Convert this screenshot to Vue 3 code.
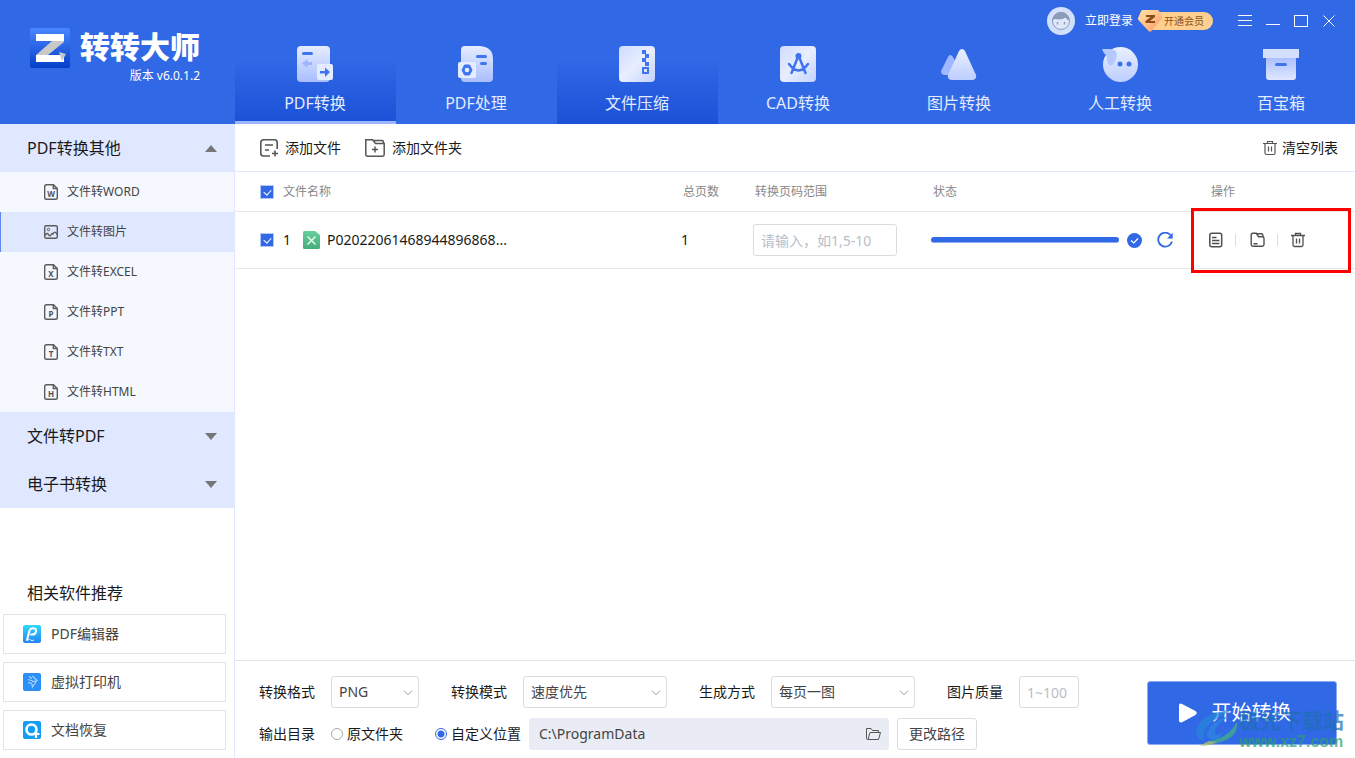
<script setup>
import { ref } from 'vue'

const tabs = [
  { id: 'pdf', label: 'PDF转换', state: 'active' },
  { id: 'process', label: 'PDF处理', state: '' },
  { id: 'zip', label: '文件压缩', state: 'hovered' },
  { id: 'cad', label: 'CAD转换', state: '' },
  { id: 'image', label: '图片转换', state: '' },
  { id: 'human', label: '人工转换', state: '' },
  { id: 'box', label: '百宝箱', state: '' }
]

const formats = [
  { label: '文件转WORD', letter: 'W' },
  { label: '文件转图片', letter: '' },
  { label: '文件转EXCEL', letter: 'X' },
  { label: '文件转PPT', letter: 'P' },
  { label: '文件转TXT', letter: 'T' },
  { label: '文件转HTML', letter: 'H' }
]
const current = ref('文件转图片')

const allChecked = ref(true)
const rowChecked = ref(true)
const range = ref('')
const format = ref('PNG')
const mode = ref('速度优先')
const method = ref('每页一图')
const quality = ref('')
const target = ref('custom')
const path = ref('C:\\ProgramData')
</script>

<template>
  <div class="app">
    <header class="header">
      <div class="brand">
        <svg class="brand-logo" width="40" height="40" viewBox="0 0 40 40" aria-hidden="true">
          <defs>
            <linearGradient id="logoBg" x1="0" y1="0" x2="0" y2="1">
              <stop offset="0" stop-color="#4a86ff" />
              <stop offset="1" stop-color="#0440c8" />
            </linearGradient>
          </defs>
          <rect width="40" height="40" rx="2" fill="url(#logoBg)" />
          <path d="M6 27 22 13h12v1L18 27z" fill="#c9c9c9" />
          <path d="M6 6h28v7H6z" fill="#fff" />
          <path d="M6 27h28v7H6z" fill="#fff" />
          <path d="M29 24l7 2-4 7z" fill="#c4c8cf" />
        </svg>
        <div class="brand-text">
          <h1 class="brand-name">转转大师</h1>
          <p class="brand-version">版本 v6.0.1.2</p>
        </div>
      </div>

      <div class="header-main">
        <div class="topbar">
          <svg class="avatar" width="28" height="28" viewBox="0 0 28 28" aria-hidden="true">
            <circle cx="14" cy="14" r="14" fill="#d3e0fb" />
            <circle cx="14" cy="14" r="8.5" fill="#dfe8fb" stroke="#8c9bb8" />
            <path d="M5.5 13.5a8.5 8.5 0 0 1 17 0c-2-.5-3-1.500-4-3-2.500 2-6 2.500-10.500 1.500-1 .3-1.500 1-2.500 1.500z" fill="#8c9bb8" />
            <path d="M10.500 15v2.500M17.500 15v2.500" stroke="#8c9bb8" stroke-width="1.500" />
          </svg>
          <button class="login" type="button">立即登录</button>
          <button class="vip" type="button">
            <svg class="vip-gem" width="24" height="22" viewBox="0 0 24 22" aria-hidden="true">
              <defs>
                <linearGradient id="gem" x1="0" y1="0" x2="1" y2="1">
                  <stop offset="0" stop-color="#ffe0a0" />
                  <stop offset=".5" stop-color="#ffc48a" />
                  <stop offset="1" stop-color="#ff8a5c" />
                </linearGradient>
              </defs>
              <path d="M5 0h14q1.500 0 2.400 1.400L24 7q.5 1-.4 2L13.500 21q-1.500 1.500-3 0L.4 10q-.8-1-.2-2.200L3 1.200Q3.600 0 5 0z" fill="url(#gem)" />
              <path d="M8 5h9v2l-5 4h5v2H7.500v-2l5-4H8z" fill="#8f4b18" />
            </svg>
            <span class="vip-label">开通会员</span>
          </button>
          <div class="window-buttons">
            <button type="button" aria-label="菜单">
              <svg width="14" height="14" viewBox="0 0 14 14"><path d="M0 1.500h14M0 6.500h14M0 11.500h14" stroke="#fff" /></svg>
            </button>
            <button type="button" aria-label="最小化">
              <svg width="14" height="14" viewBox="0 0 14 14"><path d="M0 10.500h14" stroke="#fff" /></svg>
            </button>
            <button type="button" aria-label="最大化">
              <svg width="14" height="14" viewBox="0 0 14 14"><rect x=".5" y="1.500" width="13" height="11" fill="none" stroke="#fff" /></svg>
            </button>
            <button type="button" aria-label="关闭">
              <svg width="14" height="14" viewBox="0 0 14 14"><path d="M1.500 1.500l11 11M12.500 1.500l-11 11" stroke="#fff" /></svg>
            </button>
          </div>
        </div>

        <nav class="tabs">
          <button v-for="tab in tabs" :key="tab.id" type="button" class="tab" :class="tab.state">
            <svg class="tab-icon" width="36" height="36" viewBox="0 0 36 36" aria-hidden="true">
              <defs>
                <linearGradient id="pale" x1="0" y1="0" x2="0" y2="1">
                  <stop offset="0" stop-color="#e6ecff" />
                  <stop offset="1" stop-color="#a9beff" />
                </linearGradient>
                <linearGradient id="light" x1="0" y1="0" x2="1" y2="1">
                  <stop offset="0" stop-color="#cfdcff" />
                  <stop offset=".5" stop-color="#e8eeff" />
                  <stop offset="1" stop-color="#c2d1ff" />
                </linearGradient>
                <linearGradient id="soft" x1="0" y1="0" x2="0" y2="1">
                  <stop offset="0" stop-color="#eaf0ff" />
                  <stop offset="1" stop-color="#bdceff" />
                </linearGradient>
                <linearGradient id="crate" x1="0" y1="0" x2="0" y2="1">
                  <stop offset="0" stop-color="#a9beff" />
                  <stop offset="1" stop-color="#dfe8ff" />
                </linearGradient>
              </defs>
              <template v-if="tab.id === 'pdf'">
                <rect width="33" height="36" rx="4" fill="url(#pale)" />
                <path d="M6.500 7.500h8" stroke="#3f74ee" stroke-width="3" stroke-linecap="round" />
                <path d="M5 17.500l5.500-4.500v3H15v3h-4.500v3z" fill="#9cb5fa" />
                <rect x="20" y="18" width="16" height="16" rx="2" fill="#e4ecff" />
                <path d="M33 26l-5-4.500V25h-5v2.500h5V31z" fill="#3f74ee" />
              </template>
              <template v-else-if="tab.id === 'process'">
                <path d="M7 0h15q13 1 13 13v19q0 4-4 4H7q-4 0-4-4V4q0-4 4-4z" fill="url(#pale)" />
                <path d="M19.500 10.500h8M23.500 17.500h4" stroke="#3f74ee" stroke-width="3" stroke-linecap="round" />
                <rect y="16" width="18" height="16" rx="2" fill="#e4ecff" />
                <path d="M6.500 19h5l2.500 5-2.500 5h-5L4 24z" fill="#3f74ee" stroke="#3f74ee" stroke-linejoin="round" />
                <circle cx="9" cy="24" r="2.300" fill="#e4ecff" />
              </template>
              <template v-else-if="tab.id === 'zip'">
                <rect width="36" height="36" rx="4" fill="url(#light)" />
                <path d="M23 4h4v4h-4zM26 8h4v4h-4zM23 12h4v4h-4zM26 16h4v4h-4z" fill="#3f74ee" />
                <rect x="24" y="22" width="5" height="5" fill="none" stroke="#3f74ee" stroke-width="2" />
              </template>
              <template v-else-if="tab.id === 'cad'">
                <rect width="36" height="36" rx="4" fill="url(#light)" />
                <g fill="none" stroke="#3f74ee" stroke-width="2.500" stroke-linecap="round">
                  <path d="M17.500 12l-6 15M19.500 12l6 15M9 18q9.500 13 19 0" />
                </g>
                <circle cx="18.500" cy="10" r="3" fill="#3f74ee" />
              </template>
              <template v-else-if="tab.id === 'image'">
                <path d="M.5 24L7 11q2-4 5 0l4 8-5 10H3q-4-1-2.500-5z" fill="#9fb8ff" />
                <path d="M7 29L18 5q3-4 6 0l11 24q1 4-3 5H10q-4-1-3-5z" fill="url(#soft)" />
              </template>
              <template v-else-if="tab.id === 'human'">
                <circle cx="18.500" cy="18.500" r="17.500" fill="url(#soft)" />
                <path d="M0 3h9q7 1 5.500 8-1.500 7-6 9Q4 17 5 10 1 7 0 3z" fill="#b5c8ff" />
                <circle cx="18" cy="18" r="2.500" fill="#3f74ee" />
                <circle cx="27" cy="18" r="2.500" fill="#3f74ee" />
              </template>
              <template v-else>
                <path d="M3 11h30v20q0 3-3 3H6q-3 0-3-3z" fill="url(#crate)" />
                <path d="M0 3h36v9H0z" fill="#d3dfff" />
                <path d="M13.500 18.500h9" stroke="#3f74ee" stroke-width="3" stroke-linecap="round" />
              </template>
            </svg>
            <span class="tab-label">{{ tab.label }}</span>
          </button>
        </nav>
      </div>
    </header>

    <div class="body">
      <aside class="sidebar">
        <button class="group" type="button">
          <span>PDF转换其他</span>
          <svg width="12" height="7" viewBox="0 0 12 7" aria-hidden="true"><path d="M6 0l6 7H0z" fill="#767676" /></svg>
        </button>
        <ul class="formats">
          <li v-for="item in formats" :key="item.label">
            <button type="button" class="format" :class="{ selected: item.label === current }" @click="current = item.label">
              <svg v-if="item.letter" width="14" height="16" viewBox="0 0 14 16" aria-hidden="true">
                <path d="M9.500.7H2.500q-1.800 0-1.800 1.800v11q0 1.800 1.800 1.800h9q1.800 0 1.800-1.800V4.500zM9.300 1v3.500h3.700" fill="none" stroke="#5c5c5c" stroke-width="1.400" />
                <text x="7" y="12.500" class="doc-letter" text-anchor="middle">{{ item.letter }}</text>
              </svg>
              <svg v-else width="14" height="16" viewBox="0 0 14 16" aria-hidden="true">
                <rect x=".7" y="1.700" width="12.600" height="12.600" rx="1.500" fill="none" stroke="#5c5c5c" stroke-width="1.400" />
                <circle cx="4.500" cy="5.500" r="1.200" fill="none" stroke="#5c5c5c" />
                <path d="M1 11.500q2.500-4 4 0 1.500 1 2.500-1.500 1-1 1.500 0Q11 6 13 10.500" fill="none" stroke="#5c5c5c" stroke-width="1.300" />
              </svg>
              <span>{{ item.label }}</span>
            </button>
          </li>
        </ul>
        <button class="group" type="button">
          <span>文件转PDF</span>
          <svg width="12" height="7" viewBox="0 0 12 7" aria-hidden="true"><path d="M6 7l6-7H0z" fill="#767676" /></svg>
        </button>
        <button class="group" type="button">
          <span>电子书转换</span>
          <svg width="12" height="7" viewBox="0 0 12 7" aria-hidden="true"><path d="M6 7l6-7H0z" fill="#767676" /></svg>
        </button>

        <section class="related">
          <h2 class="related-title">相关软件推荐</h2>
          <a class="related-card" href="#">
            <svg width="18" height="18" viewBox="0 0 18 18" aria-hidden="true">
              <defs>
                <linearGradient id="cyan" x1="0" y1="0" x2="0" y2="1">
                  <stop offset="0" stop-color="#31d9fb" />
                  <stop offset="1" stop-color="#2583f2" />
                </linearGradient>
              </defs>
              <rect width="18" height="18" rx="2" fill="url(#cyan)" />
              <path d="M4 15L6.500 5.500Q7.500 3 10.500 3.200q3 .3 2.500 3.300-.7 3.500-5 3" fill="none" stroke="#fff" stroke-width="2" stroke-linecap="round" />
              <path d="M5 15.500q1.500-3 2.500-.5 1.500 1.500 3.500 0" fill="none" stroke="#d9f1ff" />
            </svg>
            <span>PDF编辑器</span>
          </a>
          <a class="related-card" href="#">
            <svg width="18" height="18" viewBox="0 0 18 18" aria-hidden="true">
              <rect width="18" height="18" rx="2" fill="#2b8ff8" />
              <path d="M6 3.500l3 2M9.500 3l4.500 4.500-5 1.500M5 6.500l5 1.500M5 10q4-1.500 4.500 4L13.500 8" fill="none" stroke="#9fd2ff" stroke-width="1.200" />
            </svg>
            <span>虚拟打印机</span>
          </a>
          <a class="related-card" href="#">
            <svg width="18" height="18" viewBox="0 0 18 18" aria-hidden="true">
              <rect width="18" height="18" rx="2" fill="#149df5" />
              <circle cx="8.500" cy="8.500" r="5" fill="none" stroke="#fff" stroke-width="2.600" />
              <path d="M13 9.500v7.500M9.500 13h7" stroke="#fff" stroke-width="2.200" />
            </svg>
            <span>文档恢复</span>
          </a>
        </section>
      </aside>

      <main class="main">
        <div class="toolbar">
          <button class="tool" type="button">
            <svg width="18" height="18" viewBox="0 0 18 18" aria-hidden="true">
              <path d="M10 17H3.500q-2.700 0-2.700-2.700V3.500Q.8.800 3.500.8h11q2.700 0 2.700 2.700V10" fill="none" stroke="#555" stroke-width="1.600" />
              <path d="M5 6h8M5 11h4M15 11.500v6M12 14.500h6" stroke="#555" stroke-width="1.600" />
            </svg>
            <span>添加文件</span>
          </button>
          <button class="tool" type="button">
            <svg width="20" height="18" viewBox="0 0 20 18" aria-hidden="true">
              <path d="M.8 15.500V.8h6.700l3 3.700h8.700v11q0 1.700-1.700 1.700h-15q-1.700 0-1.700-1.700zM9 1.500h8q1.500 0 1.500 2.500" fill="none" stroke="#555" stroke-width="1.500" />
              <path d="M10 7.500v6M7 10.500h6" stroke="#555" stroke-width="1.500" />
            </svg>
            <span>添加文件夹</span>
          </button>
          <button class="tool clear" type="button">
            <svg width="14" height="16" viewBox="0 0 14 16" aria-hidden="true">
              <path d="M0 3.500h14M4.500 3V1.500h5V3M2 4v9q0 1.500 1.500 1.500h7q1.500 0 1.500-1.500V4M5.500 6.500v5M8.500 6.500v5" fill="none" stroke="#555" stroke-width="1.200" />
            </svg>
            <span>清空列表</span>
          </button>
        </div>

        <table class="files">
          <thead>
            <tr>
              <th class="col-check"><input v-model="allChecked" type="checkbox" class="check" aria-label="全选" /></th>
              <th>文件名称</th>
              <th class="col-pages">总页数</th>
              <th class="col-range">转换页码范围</th>
              <th class="col-status">状态</th>
              <th class="col-actions">操作</th>
            </tr>
          </thead>
          <tbody>
            <tr>
              <td class="col-check"><input v-model="rowChecked" type="checkbox" class="check" aria-label="选择文件" /></td>
              <td>
                <div class="file">
                  <span class="file-index">1</span>
                  <svg width="17" height="18" viewBox="0 0 17 18" aria-hidden="true">
                    <defs>
                      <linearGradient id="sheet" x1="0" y1="0" x2="0" y2="1">
                        <stop offset="0" stop-color="#65cf9a" />
                        <stop offset="1" stop-color="#48ac7a" />
                      </linearGradient>
                    </defs>
                    <path d="M1.500 0H12l5 4v12.500q0 1.500-1.500 1.500h-14Q0 18 0 16.500v-15Q0 0 1.500 0z" fill="url(#sheet)" />
                    <path d="M4.500 5.500l8 8M12.500 5.500l-8 8" stroke="#eafff4" stroke-width="1.400" />
                  </svg>
                  <span>P02022061468944896868...</span>
                </div>
              </td>
              <td>1</td>
              <td><input v-model="range" class="box range" type="text" placeholder="请输入，如1,5-10" aria-label="转换页码范围" /></td>
              <td>
                <div class="status">
                  <div class="progress" role="progressbar" aria-valuenow="100"></div>
                  <svg width="15" height="15" viewBox="0 0 15 15" aria-hidden="true">
                    <circle cx="7.500" cy="7.500" r="7.500" fill="#3168e6" />
                    <path d="M4 7.500L6.800 10 11 5.500" fill="none" stroke="#fff" stroke-width="1.200" />
                  </svg>
                  <button class="icon-button retry" type="button" aria-label="重试">
                    <svg width="16" height="16" viewBox="0 0 16 16">
                      <path d="M13.500 3A7 7 0 1 0 15 9.500" fill="none" stroke="#3168e6" stroke-width="1.800" />
                      <path d="M15.700.8v5.700H10z" fill="#3168e6" />
                    </svg>
                  </button>
                </div>
              </td>
              <td class="actions-cell">
                <div class="actions">
                  <button class="icon-button" type="button" aria-label="打开文件">
                    <svg width="14" height="16" viewBox="0 0 14 16">
                      <rect x=".8" y="1.300" width="11.900" height="13.400" rx="2" fill="none" stroke="#505050" stroke-width="1.500" />
                      <path d="M3 5.500h4.500M3 8.500h7.500M3 11.500h7.500" stroke="#505050" stroke-width="1.300" />
                    </svg>
                  </button>
                  <i class="divider"></i>
                  <button class="icon-button" type="button" aria-label="打开文件夹">
                    <svg width="16" height="16" viewBox="0 0 16 16">
                      <path d="M2.200 12.500V3q0-1.700 1.700-1.700h3.400L9.500 4.700h3.800q1.700 0 1.700 1.700v6.200q0 1.700-1.700 1.700H3.900q-1.700 0-1.700-1.700zM8 1.800h4.500q1.500 0 1.500 3M4.500 11.700h4" fill="none" stroke="#505050" stroke-width="1.400" />
                    </svg>
                  </button>
                  <i class="divider"></i>
                  <button class="icon-button" type="button" aria-label="删除">
                    <svg width="14" height="16" viewBox="0 0 14 16">
                      <path d="M0 3.500h14M4.500 3V1.500h5V3M2 4v9q0 1.500 1.500 1.500h7q1.500 0 1.500-1.500V4M5.500 6.500v5M8.500 6.500v5" fill="none" stroke="#505050" stroke-width="1.300" />
                    </svg>
                  </button>
                </div>
                <div class="marker"></div>
              </td>
            </tr>
          </tbody>
        </table>

        <footer class="settings">
          <div class="rows">
            <div class="row">
              <div class="field">
                <label for="format">转换格式</label>
                <div class="select short">
                  <select id="format" v-model="format" class="box"><option>PNG</option></select>
                  <svg class="chevron" width="10" height="6" viewBox="0 0 10 6" aria-hidden="true"><path d="M1 .7l4 4 4-4" fill="none" stroke="#999" /></svg>
                </div>
              </div>
              <div class="field">
                <label for="mode">转换模式</label>
                <div class="select">
                  <select id="mode" v-model="mode" class="box"><option>速度优先</option></select>
                  <svg class="chevron" width="10" height="6" viewBox="0 0 10 6" aria-hidden="true"><path d="M1 .7l4 4 4-4" fill="none" stroke="#999" /></svg>
                </div>
              </div>
              <div class="field">
                <label for="method">生成方式</label>
                <div class="select">
                  <select id="method" v-model="method" class="box"><option>每页一图</option></select>
                  <svg class="chevron" width="10" height="6" viewBox="0 0 10 6" aria-hidden="true"><path d="M1 .7l4 4 4-4" fill="none" stroke="#999" /></svg>
                </div>
              </div>
              <div class="field">
                <label for="quality">图片质量</label>
                <input id="quality" v-model="quality" class="box quality" type="text" placeholder="1~100" />
              </div>
            </div>
            <div class="row output">
              <span>输出目录</span>
              <div class="targets">
                <label class="radio"><input v-model="target" type="radio" name="target" value="source" />原文件夹</label>
                <label class="radio"><input v-model="target" type="radio" name="target" value="custom" />自定义位置</label>
              </div>
              <div class="path">
                <input v-model="path" type="text" readonly aria-label="输出路径" />
                <button class="icon-button" type="button" aria-label="打开目录">
                  <svg width="15" height="14" viewBox="0 0 15 14">
                    <path d="M2 12.500L4 5.500h10.500l-2 7H1.500q-1 0-1-1V1.500h4.500l1.500 2h6v2" fill="none" stroke="#555" />
                  </svg>
                </button>
              </div>
              <button class="box change" type="button">更改路径</button>
            </div>
          </div>
          <button class="start" type="button">
            <svg width="20" height="20" viewBox="0 0 20 20" aria-hidden="true"><path d="M1 2.500Q1-.5 4 1l13.500 7q2.500 2 0 4L4 19.300q-3 1-3-2z" fill="#fff" /></svg>
            <span>开始转换</span>
          </button>
          <div class="watermark" aria-hidden="true">
            <svg width="44" height="40" viewBox="0 0 44 40">
              <path d="M37 2Q8 4 2 20q-3 10 7 13-3-9 6-17Q23 9 37 2z" fill="#2388d8" />
              <path d="M12 25q4-12 22-17-15 11-14 17 1 4 8-1-3 9-11 8-6-2-5-7z" fill="#2e86de" />
              <path d="M42 14q3 20-36 24 5-2 9-5 18-3 27-19z" fill="#45b57e" />
              <path d="M5 38q4-3 9-5l8 1q-8 4-17 4z" fill="#bcc95a" />
            </svg>
            <div class="watermark-text">
              <span class="watermark-name">极光下载站</span>
              <span class="watermark-url">www.xz7.com</span>
            </div>
          </div>
        </footer>
      </main>
    </div>
  </div>
</template>

<style>
body {
  margin: 0;
}
</style>

<style scoped>
.app,
.app * {
  box-sizing: border-box;
}
.app {
  display: flex;
  flex-direction: column;
  min-height: 100vh;
  overflow: hidden;
  background: #fff;
  color: #1a1a1a;
  font-family: "Noto Sans", "Noto Sans CJK SC", sans-serif;
  font-size: 14px;
  line-height: 20px;
}
button,
input,
select {
  font: inherit;
  color: inherit;
}
button {
  padding: 0;
  border: 0;
  background: none;
  cursor: pointer;
}
svg {
  display: block;
  flex: none;
}

/* header */
.header {
  display: flex;
  background: #3168e6;
  color: #fff;
}
.brand {
  display: flex;
  flex: none;
  gap: 10px;
  width: 235px;
  padding: 28px 0 0 30px;
}
.brand-name {
  margin: 0;
  font-size: 30px;
  font-weight: 900;
  line-height: 38px;
}
.brand-version {
  margin: 0;
  font-size: 12px;
  text-align: right;
}
.header-main {
  flex: 1;
  min-width: 0;
}
.topbar {
  display: flex;
  align-items: center;
  justify-content: flex-end;
  height: 42px;
  padding-right: 19px;
  font-size: 12px;
}
.login {
  margin: 0 5px 0 10px;
}
.vip {
  display: flex;
  align-items: center;
  height: 22px;
  margin-right: 25px;
}
.vip-gem {
  z-index: 1;
}
.vip-label {
  height: 18px;
  margin-left: -12px;
  padding: 0 9px 0 14px;
  border-radius: 0 9px 9px 0;
  background: #ffcf8f;
  color: #8a5320;
  font-size: 10px;
  line-height: 18px;
}
.window-buttons {
  display: flex;
  gap: 14px;
}
.tabs {
  display: flex;
  overflow: hidden;
}
.tab {
  display: flex;
  flex: none;
  flex-direction: column;
  align-items: center;
  gap: 9px;
  width: 161px;
  height: 82px;
  padding: 4px 1px 0 0;
  border-bottom: 3px solid transparent;
  color: #e3ebff;
}
.tab-label {
  font-size: 16px;
  line-height: 24px;
}
.tab.active,
.tab.hovered {
  background: linear-gradient(#3168e6 20%, #1b51d6) border-box;
}
.tab.active {
  border-bottom-color: #9db5ff;
}

/* sidebar */
.body {
  display: flex;
  flex: 1;
}
.sidebar {
  display: flex;
  flex: none;
  flex-direction: column;
  width: 235px;
  border-right: 1px solid #e0e8ff;
}
.group {
  display: flex;
  align-items: center;
  justify-content: space-between;
  height: 48px;
  padding: 0 17px 0 27px;
  background: #e0e8ff;
  font-size: 16px;
}
.formats {
  margin: 0;
  padding: 0;
  list-style: none;
  background: #f5f8ff;
}
.format {
  display: flex;
  align-items: center;
  gap: 9px;
  width: 100%;
  height: 40px;
  padding-left: 43px;
  border-left: 1px solid transparent;
  color: #444;
  font-size: 12px;
}
.format.selected {
  border-left-color: #5f86e8;
  background: #e0e8ff;
}
.doc-letter {
  fill: #505050;
  font-size: 8px;
  font-weight: 700;
}
.related {
  display: flex;
  flex-direction: column;
  gap: 8px;
  margin-top: auto;
  padding: 0 8px 8px 3px;
}
.related-title {
  margin: 0 0 3px;
  padding-left: 24px;
  font-size: 16px;
  font-weight: 400;
}
.related-card {
  display: flex;
  align-items: center;
  gap: 10px;
  height: 40px;
  padding-left: 19px;
  border: 1px solid #e2e2e2;
  color: #444;
  text-decoration: none;
}

/* main area */
.main {
  display: flex;
  flex: 1;
  flex-direction: column;
  min-width: 0;
}
.toolbar {
  display: flex;
  gap: 24px;
  height: 48px;
  padding: 0 17px 0 25px;
  border-bottom: 1px solid #e0e8ff;
}
.tool {
  display: flex;
  align-items: center;
  gap: 7px;
}
.clear {
  gap: 5px;
  margin-left: auto;
}
.files {
  width: 100%;
  border-collapse: separate;
  border-spacing: 0;
  table-layout: fixed;
}
.files th,
.files td {
  padding: 0;
  border-bottom: 1px solid #e8e8e8;
  text-align: left;
  white-space: nowrap;
}
.files th {
  height: 40px;
  color: #888;
  font-size: 12px;
  font-weight: 400;
}
.files td {
  height: 57px;
}
.files .col-check {
  width: 48px;
  padding-left: 25px;
}
.files .col-pages {
  width: 72px;
  padding-left: 2px;
}
.files .col-range {
  width: 178px;
  padding-left: 2px;
}
.files .col-status {
  width: 260px;
  padding-left: 2px;
}
.files .col-actions {
  width: 164px;
  padding-left: 20px;
}
.check {
  display: block;
  position: relative;
  width: 14px;
  height: 14px;
  margin: 0;
  border: 1px solid #b4c8f8;
  appearance: none;
}
.check:checked {
  background: #3168e6;
}
.check:checked::after {
  content: "";
  position: absolute;
  top: 2px;
  left: 4px;
  width: 4px;
  height: 6px;
  border: solid #fff;
  border-width: 0 1px 1px 0;
  transform: rotate(42deg);
}
.file {
  display: flex;
  align-items: center;
}
.file-index {
  width: 20px;
}
.file svg {
  margin-right: 7px;
}
.box {
  height: 32px;
  padding: 0 7px;
  border: 1px solid #dcdcdc;
  border-radius: 3px;
  background: #fff;
  color: #444;
}
.box::placeholder {
  color: #b8bec8;
}
.range {
  display: block;
  width: 144px;
}
.status {
  display: flex;
  align-items: center;
}
.progress {
  width: 188px;
  height: 6px;
  margin-right: 8px;
  border: solid #8caaf2;
  border-width: 0 0 1px;
  border-radius: 3px;
  background: #3168e6;
}
.retry {
  margin-left: 15px;
}
.actions-cell {
  position: relative;
}
.actions {
  display: flex;
  align-items: center;
  padding-left: 18px;
}
.divider {
  width: 1px;
  height: 12px;
  margin: 0 13px 0 12px;
  background: #dcdcdc;
}
.marker {
  position: absolute;
  inset: -4px 4px -5px 0;
  border: 3px solid #f00;
  pointer-events: none;
}

/* settings */
.settings {
  display: flex;
  position: relative;
  justify-content: space-between;
  margin-top: auto;
  padding: 15px 18px 8px 24px;
  border-top: 1px solid #e2e2e2;
}
.rows {
  display: flex;
  flex-direction: column;
  gap: 10px;
}
.row {
  display: flex;
  gap: 32px;
}
.field {
  display: flex;
  align-items: center;
  gap: 16px;
}
.select {
  position: relative;
  width: 144px;
}
.select.short {
  width: 88px;
}
.select select {
  display: block;
  width: 100%;
  appearance: none;
}
.chevron {
  position: absolute;
  top: 14px;
  right: 6px;
  pointer-events: none;
}
.quality {
  width: 60px;
}
.row.output {
  align-items: center;
  gap: 8px;
}
.targets {
  display: flex;
  gap: 32px;
  padding-left: 8px;
}
.radio {
  display: flex;
  align-items: center;
  gap: 4px;
}
.radio input {
  width: 12px;
  height: 12px;
  margin: 0;
  border: 1px solid #aaa;
  border-radius: 50%;
  appearance: none;
}
.radio input:checked {
  border-color: #3168e6;
  background: radial-gradient(#3168e6 3px, #fff 4px);
}
.path {
  display: flex;
  flex: 0 0 360px;
  align-items: center;
  height: 32px;
  padding: 0 8px 0 10px;
  border-radius: 3px;
  background: #e9ecf5;
  color: #444;
}
.path input {
  flex: 1;
  min-width: 0;
  padding: 0;
  border: 0;
  background: none;
}
.row .change {
  width: 80px;
}
.start {
  display: flex;
  align-items: center;
  justify-content: center;
  gap: 14px;
  width: 190px;
  height: 64px;
  margin-top: 5px;
  padding-right: 15px;
  border: 1px solid #8caaf2;
  border-radius: 3px;
  background: #3168e6;
  color: #fff;
  font-size: 20px;
}
.watermark {
  display: flex;
  position: absolute;
  right: 11px;
  bottom: 6px;
  opacity: 0.7;
  pointer-events: none;
}
.watermark-text {
  display: flex;
  flex-direction: column;
}
.watermark-name {
  color: #1d6fb4;
  font-size: 21px;
  font-weight: 700;
  line-height: 24px;
}
.watermark-url {
  color: #2aa06c;
  font-family: "Liberation Sans", sans-serif;
  font-size: 16px;
  font-weight: 700;
  line-height: 20px;
}
</style>
